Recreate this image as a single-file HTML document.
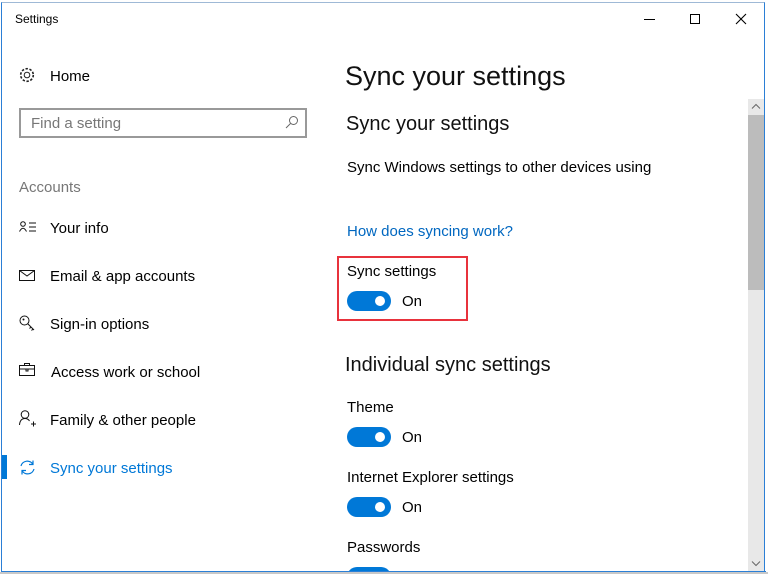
<!DOCTYPE html>
<html style="width:768px;height:574px;overflow:hidden"><head><style>
*{margin:0;padding:0;box-sizing:border-box}
body{width:768px;height:574px;background:#fff;position:relative;overflow:hidden;font-family:"Liberation Sans",sans-serif;color:#000}
.t{position:absolute;white-space:nowrap}
.win{position:absolute;left:1px;top:2px;width:764px;height:570px;border:1px solid #2b7fd6;border-top:1px solid #9fb9d6;background:#fff}
.shadow{position:absolute;left:0;top:572px;width:768px;height:2px;background:#c8c8c8}
.tog{position:absolute;width:44px;height:20px;border-radius:10px;background:#0078d7}
.tog:after{content:"";position:absolute;right:6px;top:5px;width:10px;height:10px;border-radius:50%;background:#fff}
svg{position:absolute}
</style></head><body>
<div class="win"></div>
<div class="t" style="left:15px;top:12px;font-size:12px">Settings</div>
<div style="position:absolute;left:644px;top:19px;width:11px;height:1px;background:#000"></div>
<div style="position:absolute;left:690px;top:14px;width:10px;height:10px;border:1px solid #000"></div>
<svg style="left:735px;top:13px" width="12" height="12"><path d="M1 1L11 11M11 1L1 11" stroke="#000" stroke-width="1.1"/></svg>
<svg style="left:18px;top:66px" width="18" height="18" viewBox="0 0 18 18"><circle cx="9" cy="9" r="2.8" fill="none" stroke="#222"/><circle cx="9" cy="9" r="6.3" fill="none" stroke="#222" stroke-width="1.6" stroke-dasharray="2.4 1.6"/></svg>
<div class="t" style="left:50px;top:68px;font-size:15px">Home</div>
<div style="position:absolute;left:19px;top:108px;width:288px;height:30px;border:2px solid #999"></div>
<div class="t" style="left:31px;top:115px;font-size:15px;color:#777">Find a setting</div>
<svg style="left:285px;top:115px" width="14" height="14"><circle cx="8.5" cy="5.5" r="4" fill="none" stroke="#666"/><path d="M5.5 8.5L1 13" stroke="#666"/></svg>
<div class="t" style="left:19px;top:179px;font-size:15px;color:#777">Accounts</div>
<svg style="left:19px;top:221px" width="18" height="12"><circle cx="4" cy="3" r="2.3" fill="none" stroke="#111"/><path d="M0.5 10.5Q4 4 7.5 10.5M10 2H17M10 6H17M10 10H17" fill="none" stroke="#111"/></svg>
<div class="t" style="left:50px;top:220px;font-size:15px">Your info</div>
<svg style="left:19px;top:270px" width="17" height="12"><rect x="0.5" y="0.5" width="15" height="10" fill="none" stroke="#111"/><path d="M0.5 0.5L8 6L15.5 0.5" fill="none" stroke="#111"/></svg>
<div class="t" style="left:50px;top:268px;font-size:15px">Email &amp; app accounts</div>
<svg style="left:19px;top:315px" width="17" height="17"><circle cx="5.5" cy="5.5" r="4.5" fill="none" stroke="#111"/><circle cx="4.5" cy="4.5" r="1" fill="#111"/><path d="M8.5 8.5L15 15M12 12L10.5 13.5M14 14L12.5 15.5" fill="none" stroke="#111"/></svg>
<div class="t" style="left:50px;top:316px;font-size:15px">Sign-in options</div>
<svg style="left:19px;top:363px" width="17" height="13"><rect x="0.5" y="2.5" width="15" height="10" fill="none" stroke="#111"/><path d="M5.5 2.5V0.5H10.5V2.5M0.5 6H15.5M7 6V8H9V6" fill="none" stroke="#111"/></svg>
<div class="t" style="left:51px;top:364px;font-size:15px">Access work or school</div>
<svg style="left:19px;top:410px" width="18" height="17"><circle cx="6" cy="4.5" r="3.8" fill="none" stroke="#111"/><path d="M0.5 15Q1 8.5 6 8.5Q9 8.5 10.5 11M12 14H17M14.5 11.5V16.5" fill="none" stroke="#111"/></svg>
<div class="t" style="left:50px;top:412px;font-size:15px">Family &amp; other people</div>
<div style="position:absolute;left:2px;top:455px;width:5px;height:24px;background:#0078d7"></div>
<svg style="left:19px;top:459px" width="17" height="17"><path d="M2 7A6.5 6.5 0 0 1 14 5.5M15 10A6.5 6.5 0 0 1 3 11.5M14 1.5V5.5H10M3 15.5V11.5H7" fill="none" stroke="#0078d7" stroke-width="1.2"/></svg>
<div class="t" style="left:50px;top:460px;font-size:15px;color:#0078d7">Sync your settings</div>
<div class="t" style="left:345px;top:61px;font-size:27px;color:#111">Sync your settings</div>
<div class="t" style="left:346px;top:113px;font-size:20px;color:#111">Sync your settings</div>
<div class="t" style="left:347px;top:159px;font-size:15px">Sync Windows settings to other devices using</div>
<div class="t" style="left:347px;top:223px;font-size:15px;color:#0067c0">How does syncing work?</div>
<div style="position:absolute;left:337px;top:256px;width:131px;height:65px;border:2px solid #e8323c"></div>
<div class="t" style="left:347px;top:263px;font-size:15px">Sync settings</div>
<div class="tog" style="left:347px;top:291px"></div>
<div class="t" style="left:402px;top:293px;font-size:15px">On</div>
<div class="t" style="left:345px;top:354px;font-size:20px;color:#111">Individual sync settings</div>
<div class="t" style="left:347px;top:399px;font-size:15px">Theme</div>
<div class="tog" style="left:347px;top:427px"></div>
<div class="t" style="left:402px;top:429px;font-size:15px">On</div>
<div class="t" style="left:347px;top:469px;font-size:15px">Internet Explorer settings</div>
<div class="tog" style="left:347px;top:497px"></div>
<div class="t" style="left:402px;top:499px;font-size:15px">On</div>
<div class="t" style="left:347px;top:539px;font-size:15px">Passwords</div>
<div style="position:absolute;left:347px;top:567px;width:44px;height:4px;overflow:hidden"><div class="tog" style="left:0;top:0"></div></div>
<div style="position:absolute;left:748px;top:99px;width:16px;height:472px;background:#e8e8e8"></div>
<div style="position:absolute;left:748px;top:115px;width:16px;height:175px;background:#bcbcbc"></div>
<svg style="left:751px;top:103px" width="10" height="7"><path d="M1 5.5L5 1.5L9 5.5" fill="none" stroke="#666"/></svg>
<svg style="left:751px;top:560px" width="10" height="7"><path d="M1 1.5L5 5.5L9 1.5" fill="none" stroke="#666"/></svg>
<div style="position:absolute;left:1px;top:571px;width:765px;height:1px;background:#2b7fd6"></div>
<div class="shadow"></div>
</body></html>
